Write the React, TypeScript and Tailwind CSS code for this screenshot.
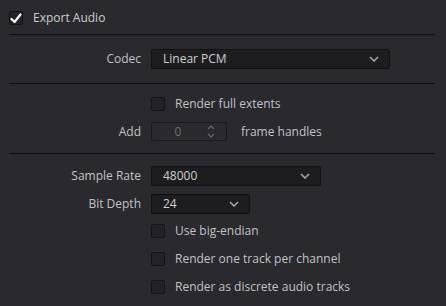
import React from "react";

const font = { fontFamily: '"Open Sans", "Noto Sans", sans-serif' };

const Check = ({ checked = false }: { checked?: boolean }) => (
  <div className="w-[14px] h-[14px] shrink-0 rounded-[2px] border border-[#141416] bg-[#232327] flex items-center justify-center">
    {checked && (
      <svg width="12" height="11" viewBox="0 0 12 11">
        <path d="M1.5 6 L4.5 9 L10.5 1.5" fill="none" stroke="#fff" strokeWidth="2.2" strokeLinecap="round" strokeLinejoin="round" />
      </svg>
    )}
  </div>
);

const Chevron = () => (
  <svg width="10" height="6" viewBox="0 0 10 6">
    <path d="M1 1 L5 5 L9 1" fill="none" stroke="#a9a9ad" strokeWidth="1.5" />
  </svg>
);

const Select = ({ value, width }: { value: string; width: string }) => (
  <div className={`${width} h-[20px] rounded-[2px] border border-[#111113] bg-[#1d1d20] flex items-center justify-between pl-[11px] pr-[10px] text-[12px] text-[#cfcfd2]`}>
    <span>{value}</span>
    <Chevron />
  </div>
);

const Separator = () => <div className="h-px bg-[#0f0f11] ml-[9px] mr-[11px]" />;

const Label = ({ children }: { children?: React.ReactNode }) => (
  <div className="w-[132px] shrink-0 text-right text-[12px] text-[#c2c2c6]">{children}</div>
);

const Row = ({ label, children, className = "" }: { label?: string; children: React.ReactNode; className?: string }) => (
  <div className={`flex items-center pl-[9px] gap-[10px] ${className}`}>
    <Label>{label}</Label>
    {children}
  </div>
);

const CheckRow = ({ text, className = "" }: { text: string; className?: string }) => (
  <Row className={className}>
    <div className="flex items-center gap-[10px]">
      <Check />
      <span className="text-[12px] text-[#c2c2c6] leading-[14px]">{text}</span>
    </div>
  </Row>
);

export default function App() {
  return (
    <div className="w-[446px] h-[306px] bg-[#29292e] overflow-hidden pt-[11px]" style={font}>
      <div className="flex items-center gap-[10px] pl-[9px] h-[14px]">
        <Check checked />
        <span className="text-[12px] text-[#cdcdd0]">Export Audio</span>
      </div>
      <div className="mt-[9px]">
        <Separator />
      </div>
      <Row label="Codec" className="mt-[14px] h-[20px]">
        <Select value="Linear PCM" width="w-[239px]" />
      </Row>
      <div className="mt-[14px]">
        <Separator />
      </div>
      <CheckRow text="Render full extents" className="mt-[13px] h-[14px]" />
      <Row label="Add" className="mt-[11px] h-[19px]">
        <div className="flex items-center gap-[14px]">
          <div className="w-[76px] h-[19px] rounded-[2px] border border-[#1a1a1d] bg-[#29292e] flex items-center">
            <span className="w-[52px] text-center text-[12px] text-[#6f6f74]">0</span>
            <svg width="10" height="15" viewBox="0 0 10 15" className="ml-[2px]">
              <path d="M2 5 L5 2 L8 5" fill="none" stroke="#6a6a6f" strokeWidth="1.2" />
              <path d="M2 10 L5 13 L8 10" fill="none" stroke="#6a6a6f" strokeWidth="1.2" />
            </svg>
          </div>
          <span className="text-[12px] text-[#c2c2c6]">frame handles</span>
        </div>
      </Row>
      <div className="mt-[12px]">
        <Separator />
      </div>
      <Row label="Sample Rate" className="mt-[12px] h-[20px]">
        <Select value="48000" width="w-[170px]" />
      </Row>
      <Row label="Bit Depth" className="mt-[8px] h-[19px]">
        <Select value="24" width="w-[99px]" />
      </Row>
      <CheckRow text="Use big-endian" className="mt-[11px] h-[14px]" />
      <CheckRow text="Render one track per channel" className="mt-[14px] h-[14px]" />
      <CheckRow text="Render as discrete audio tracks" className="mt-[14px] h-[14px]" />
    </div>
  );
}
